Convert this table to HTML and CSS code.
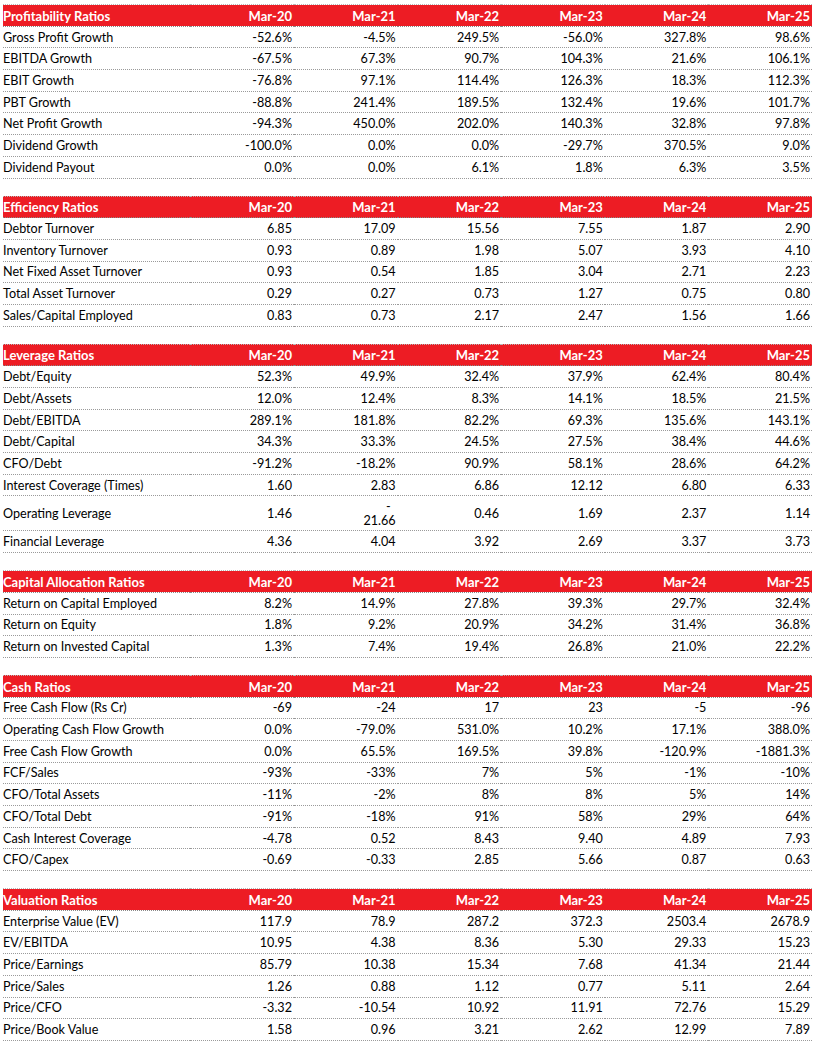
FILE: index.html
```html
<!DOCTYPE html>
<html>
<head>
<meta charset="utf-8">
<link rel="stylesheet" href="styles.css">
</head>
<body>
<div class="wrap">
<table class="ratios">
<colgroup><col class="c-label"><col class="c-val"><col class="c-val"><col class="c-val"><col class="c-val"><col class="c-val"><col class="c-val"></colgroup>
<tbody>
<tr class="hd"><td>Profitability Ratios</td><td>Mar-20</td><td>Mar-21</td><td>Mar-22</td><td>Mar-23</td><td>Mar-24</td><td>Mar-25</td></tr>
<tr><td>Gross Profit Growth</td><td>-52.6%</td><td>-4.5%</td><td>249.5%</td><td>-56.0%</td><td>327.8%</td><td>98.6%</td></tr>
<tr><td>EBITDA Growth</td><td>-67.5%</td><td>67.3%</td><td>90.7%</td><td>104.3%</td><td>21.6%</td><td>106.1%</td></tr>
<tr><td>EBIT Growth</td><td>-76.8%</td><td>97.1%</td><td>114.4%</td><td>126.3%</td><td>18.3%</td><td>112.3%</td></tr>
<tr><td>PBT Growth</td><td>-88.8%</td><td>241.4%</td><td>189.5%</td><td>132.4%</td><td>19.6%</td><td>101.7%</td></tr>
<tr><td>Net Profit Growth</td><td>-94.3%</td><td>450.0%</td><td>202.0%</td><td>140.3%</td><td>32.8%</td><td>97.8%</td></tr>
<tr><td>Dividend Growth</td><td>-100.0%</td><td>0.0%</td><td>0.0%</td><td>-29.7%</td><td>370.5%</td><td>9.0%</td></tr>
<tr><td>Dividend Payout</td><td>0.0%</td><td>0.0%</td><td>6.1%</td><td>1.8%</td><td>6.3%</td><td>3.5%</td></tr>
<tr class="gap"><td colspan="7"></td></tr>

<tr class="hd"><td>Efficiency Ratios</td><td>Mar-20</td><td>Mar-21</td><td>Mar-22</td><td>Mar-23</td><td>Mar-24</td><td>Mar-25</td></tr>
<tr><td>Debtor Turnover</td><td>6.85</td><td>17.09</td><td>15.56</td><td>7.55</td><td>1.87</td><td>2.90</td></tr>
<tr><td>Inventory Turnover</td><td>0.93</td><td>0.89</td><td>1.98</td><td>5.07</td><td>3.93</td><td>4.10</td></tr>
<tr><td>Net Fixed Asset Turnover</td><td>0.93</td><td>0.54</td><td>1.85</td><td>3.04</td><td>2.71</td><td>2.23</td></tr>
<tr><td>Total Asset Turnover</td><td>0.29</td><td>0.27</td><td>0.73</td><td>1.27</td><td>0.75</td><td>0.80</td></tr>
<tr><td>Sales/Capital Employed</td><td>0.83</td><td>0.73</td><td>2.17</td><td>2.47</td><td>1.56</td><td>1.66</td></tr>
<tr class="gap"><td colspan="7"></td></tr>

<tr class="hd"><td>Leverage Ratios</td><td>Mar-20</td><td>Mar-21</td><td>Mar-22</td><td>Mar-23</td><td>Mar-24</td><td>Mar-25</td></tr>
<tr><td>Debt/Equity</td><td>52.3%</td><td>49.9%</td><td>32.4%</td><td>37.9%</td><td>62.4%</td><td>80.4%</td></tr>
<tr><td>Debt/Assets</td><td>12.0%</td><td>12.4%</td><td>8.3%</td><td>14.1%</td><td>18.5%</td><td>21.5%</td></tr>
<tr><td>Debt/EBITDA</td><td>289.1%</td><td>181.8%</td><td>82.2%</td><td>69.3%</td><td>135.6%</td><td>143.1%</td></tr>
<tr><td>Debt/Capital</td><td>34.3%</td><td>33.3%</td><td>24.5%</td><td>27.5%</td><td>38.4%</td><td>44.6%</td></tr>
<tr><td>CFO/Debt</td><td>-91.2%</td><td>-18.2%</td><td>90.9%</td><td>58.1%</td><td>28.6%</td><td>64.2%</td></tr>
<tr><td>Interest Coverage (Times)</td><td>1.60</td><td>2.83</td><td>6.86</td><td>12.12</td><td>6.80</td><td>6.33</td></tr>
<tr class="tall"><td>Operating Leverage</td><td>1.46</td><td><span class="wrapdash">-</span><br>21.66</td><td>0.46</td><td>1.69</td><td>2.37</td><td>1.14</td></tr>
<tr><td>Financial Leverage</td><td>4.36</td><td>4.04</td><td>3.92</td><td>2.69</td><td>3.37</td><td>3.73</td></tr>
<tr class="gap"><td colspan="7"></td></tr>

<tr class="hd"><td>Capital Allocation Ratios</td><td>Mar-20</td><td>Mar-21</td><td>Mar-22</td><td>Mar-23</td><td>Mar-24</td><td>Mar-25</td></tr>
<tr><td>Return on Capital Employed</td><td>8.2%</td><td>14.9%</td><td>27.8%</td><td>39.3%</td><td>29.7%</td><td>32.4%</td></tr>
<tr><td>Return on Equity</td><td>1.8%</td><td>9.2%</td><td>20.9%</td><td>34.2%</td><td>31.4%</td><td>36.8%</td></tr>
<tr><td>Return on Invested Capital</td><td>1.3%</td><td>7.4%</td><td>19.4%</td><td>26.8%</td><td>21.0%</td><td>22.2%</td></tr>
<tr class="gap"><td colspan="7"></td></tr>

<tr class="hd"><td>Cash Ratios</td><td>Mar-20</td><td>Mar-21</td><td>Mar-22</td><td>Mar-23</td><td>Mar-24</td><td>Mar-25</td></tr>
<tr><td>Free Cash Flow (Rs Cr)</td><td>-69</td><td>-24</td><td>17</td><td>23</td><td>-5</td><td>-96</td></tr>
<tr><td>Operating Cash Flow Growth</td><td>0.0%</td><td>-79.0%</td><td>531.0%</td><td>10.2%</td><td>17.1%</td><td>388.0%</td></tr>
<tr><td>Free Cash Flow Growth</td><td>0.0%</td><td>65.5%</td><td>169.5%</td><td>39.8%</td><td>-120.9%</td><td>-1881.3%</td></tr>
<tr><td>FCF/Sales</td><td>-93%</td><td>-33%</td><td>7%</td><td>5%</td><td>-1%</td><td>-10%</td></tr>
<tr><td>CFO/Total Assets</td><td>-11%</td><td>-2%</td><td>8%</td><td>8%</td><td>5%</td><td>14%</td></tr>
<tr><td>CFO/Total Debt</td><td>-91%</td><td>-18%</td><td>91%</td><td>58%</td><td>29%</td><td>64%</td></tr>
<tr><td>Cash Interest Coverage</td><td>-4.78</td><td>0.52</td><td>8.43</td><td>9.40</td><td>4.89</td><td>7.93</td></tr>
<tr><td>CFO/Capex</td><td>-0.69</td><td>-0.33</td><td>2.85</td><td>5.66</td><td>0.87</td><td>0.63</td></tr>
<tr class="gap"><td colspan="7"></td></tr>

<tr class="hd"><td>Valuation Ratios</td><td>Mar-20</td><td>Mar-21</td><td>Mar-22</td><td>Mar-23</td><td>Mar-24</td><td>Mar-25</td></tr>
<tr><td>Enterprise Value (EV)</td><td>117.9</td><td>78.9</td><td>287.2</td><td>372.3</td><td>2503.4</td><td>2678.9</td></tr>
<tr><td>EV/EBITDA</td><td>10.95</td><td>4.38</td><td>8.36</td><td>5.30</td><td>29.33</td><td>15.23</td></tr>
<tr><td>Price/Earnings</td><td>85.79</td><td>10.38</td><td>15.34</td><td>7.68</td><td>41.34</td><td>21.44</td></tr>
<tr><td>Price/Sales</td><td>1.26</td><td>0.88</td><td>1.12</td><td>0.77</td><td>5.11</td><td>2.64</td></tr>
<tr><td>Price/CFO</td><td>-3.32</td><td>-10.54</td><td>10.92</td><td>11.91</td><td>72.76</td><td>15.29</td></tr>
<tr><td>Price/Book Value</td><td>1.58</td><td>0.96</td><td>3.21</td><td>2.62</td><td>12.99</td><td>7.89</td></tr>
</tbody>
</table>
</div>
</body>
</html>
```
FILE: styles.css
```css
html, body {
  margin: 0;
  padding: 0;
  background: #ffffff;
}
body {
  font-family: Lato, "Liberation Sans", sans-serif;
  font-size: 12.6px;
  color: #000000;
}
.wrap {
  padding: 4px 0 0 3px;
}
.ratios {
  width: 809px;
  table-layout: fixed;
  border-collapse: collapse;
}
.c-label { width: 187.4px; }
.c-val { width: 103.6px; }
.ratios td {
  padding: 1px 2px 0 0;
  height: 19.7px;
  line-height: 14px;
  text-align: right;
  vertical-align: middle;
  white-space: nowrap;
  border-bottom: 1px dotted #9a9a9a;
}
.ratios td:first-child {
  text-align: left;
  padding-right: 0;
}
.ratios tr.hd td {
  background: #ed1c24;
  color: #ffffff;
  font-weight: 700;
  font-size: 13px;
  border-top: 1px dotted #b8b8b8;
  border-bottom: 1px dotted #8a8a8a;
}
.ratios tr.gap td {
  height: 16px;
  border-bottom: none;
}
.ratios tr.tall td {
  height: 33px;
}
.wrapdash {
  display: inline-block;
  margin-right: 5px;
}
```
